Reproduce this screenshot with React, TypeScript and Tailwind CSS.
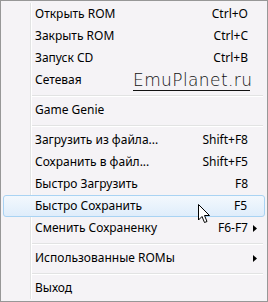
import React from "react";

type Item =
  | { kind: "item"; label: string; shortcut?: string; submenu?: boolean; hover?: boolean }
  | { kind: "sep" };

const items: Item[] = [
  { kind: "item", label: "Открыть ROM", shortcut: "Ctrl+O" },
  { kind: "item", label: "Закрыть ROM", shortcut: "Ctrl+C" },
  { kind: "item", label: "Запуск CD", shortcut: "Ctrl+B" },
  { kind: "item", label: "Сетевая" },
  { kind: "sep" },
  { kind: "item", label: "Game Genie" },
  { kind: "sep" },
  { kind: "item", label: "Загрузить из файла...", shortcut: "Shift+F8" },
  { kind: "item", label: "Сохранить в файл...", shortcut: "Shift+F5" },
  { kind: "item", label: "Быстро Загрузить", shortcut: "F8" },
  { kind: "item", label: "Быстро Сохранить", shortcut: "F5", hover: true },
  { kind: "item", label: "Сменить Сохраненку", shortcut: "F6-F7", submenu: true },
  { kind: "sep" },
  { kind: "item", label: "Использованные ROMы", submenu: true },
  { kind: "sep" },
  { kind: "item", label: "Выход" },
];

function Cursor() {
  return (
    <svg width="13" height="20" viewBox="0 0 13 20" className="absolute left-[194px] top-[8px]">
      <path
        d="M0.5 0.5 L0.5 16 L4 12.5 L6.5 18.5 L9 17.5 L6.5 11.5 L11.5 11.5 Z"
        fill="#fff"
        stroke="#000"
        strokeWidth="1"
      />
    </svg>
  );
}

export default function App() {
  return (
    <div className="w-[268px] h-[302px] bg-[#f5f3f6] border border-[#979797] p-[2px] relative font-['Noto_Sans',sans-serif] text-[12px] text-black">
      {/* gutter line */}
      <div className="absolute left-[29px] top-[2px] bottom-[2px] w-[2px] border-l border-l-[#e2e3e3] border-r border-r-white" />

      <div className="flex flex-col relative">
        {items.map((it, i) =>
          it.kind === "sep" ? (
            <div key={i} className="h-[8px] pl-[29px] pr-[2px] pt-[4px]">
              <div className="h-[2px] border-t border-t-[#e2e3e3] border-b border-b-white" />
            </div>
          ) : (
            <div
              key={i}
              className={
                "h-[22px] relative flex items-center rounded-[3px] " +
                (it.hover
                  ? "border border-[#a9d3f3] bg-gradient-to-b from-[#f3f8fd] to-[#dfedfb] pl-[31px]"
                  : "pl-[32px]")
              }
            >
              <span className="flex-1 leading-none">{it.label}</span>
              {it.shortcut && <span className="leading-none">{it.shortcut}</span>}
              <div className="w-[17px] flex pl-[5px]">
                {it.submenu && (
                  <svg width="4" height="7" viewBox="0 0 4 7">
                    <path d="M0 0 L4 3.5 L0 7 Z" fill="#000" />
                  </svg>
                )}
              </div>
              {it.hover && <Cursor />}
            </div>
          )
        )}
      </div>

      {/* watermark */}
      <div className="absolute left-[132px] top-[69px] w-[117px] border-b border-b-[#111] font-['DejaVu_Sans',sans-serif] font-extralight text-[17px] leading-[20px] text-[#111] tracking-[0.4px]">
        EmuPlanet.ru
      </div>
    </div>
  );
}
